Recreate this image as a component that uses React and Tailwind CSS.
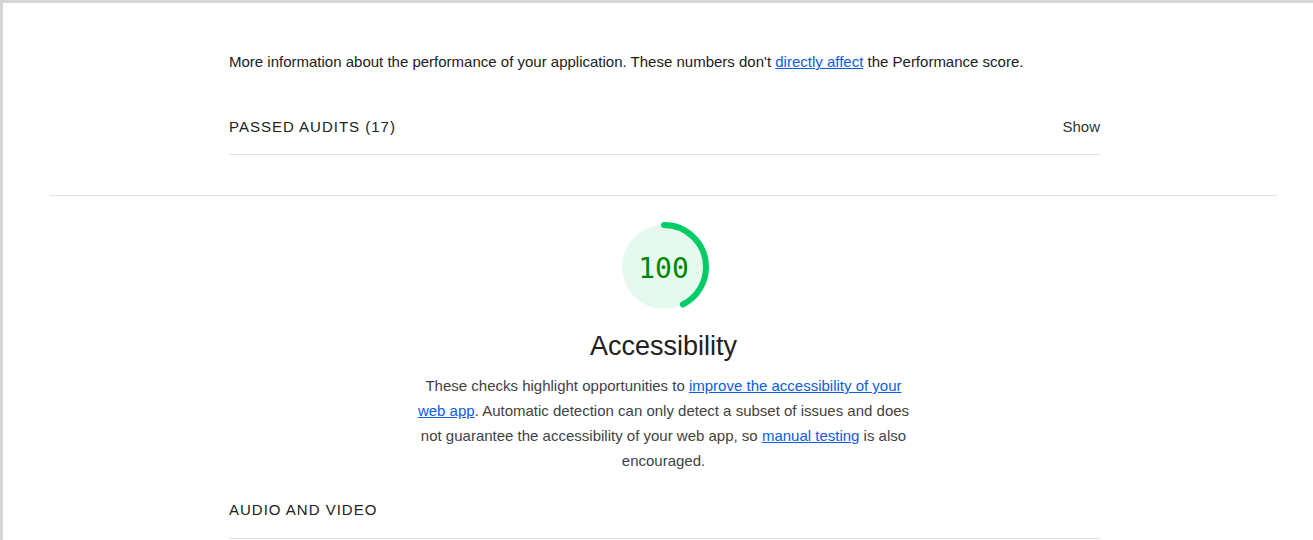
import React from "react";

const LINK = "text-[#0b5ce8] underline";

function Gauge({ score }) {
  const circ = 2 * Math.PI * 56;
  const arc = circ * 0.425;
  return (
    <div className="relative h-[90px] w-[90px]">
      <svg viewBox="0 0 120 120" className="h-[90px] w-[90px]">
        <circle cx="60" cy="60" r="56" fill="#e6f9ef" />
        <circle
          cx="60"
          cy="60"
          r="56"
          fill="none"
          stroke="#00cc66"
          strokeWidth="8"
          strokeLinecap="round"
          strokeDasharray={`${arc} ${circ}`}
          transform="rotate(-90 60 60)"
        />
      </svg>
      <div className="absolute inset-0 flex items-center justify-center pt-[3px] font-['DejaVu_Sans_Mono',monospace] text-[28px] text-[#008800]">
        {score}
      </div>
    </div>
  );
}

export default function App() {
  return (
    <div className="h-[540px] overflow-hidden border-t-[3px] border-l-[3px] border-[#d6d6d6] bg-white font-['Liberation_Sans',Arial,sans-serif] text-[#212121]">
      <div className="ml-[47px] w-[1227px]">
        <div className="ml-[179px] w-[871px] pt-[49px]">
          <p className="text-[15px] leading-[20px]">
            More information about the performance of your application. These numbers don't{" "}
            <a className={LINK}>directly affect</a> the Performance score.
          </p>
          <div className="mt-[45px] flex items-center justify-between border-b border-[#e0e0e0] pb-[17px] text-[15px] leading-[20px]">
            <span className="tracking-[1px]">PASSED AUDITS (17)</span>
            <span className="text-[#333]">Show</span>
          </div>
        </div>

        <div className="mt-[40px] border-t border-[#e0e0e0]">
          <div className="flex flex-col items-center pt-[26px]">
            <Gauge score="100" />
            <h2 className="mt-[18px] text-[27px] leading-[32px]">Accessibility</h2>
            <p className="mt-[11px] w-[500px] text-center text-[15px] leading-[25px] text-[#424242]">
              These checks highlight opportunities to{" "}
              <a className={LINK}>improve the accessibility of your web app</a>. Automatic
              detection can only detect a subset of issues and does not guarantee the
              accessibility of your web app, so <a className={LINK}>manual testing</a> is also
              encouraged.
            </p>
          </div>

          <div className="ml-[179px] w-[871px]">
            <div className="mt-[27px] border-b border-[#e0e0e0] pb-[18px] text-[15px] leading-[20px]">
              <span className="tracking-[1px]">AUDIO AND VIDEO</span>
            </div>
          </div>
        </div>
      </div>
    </div>
  );
}
